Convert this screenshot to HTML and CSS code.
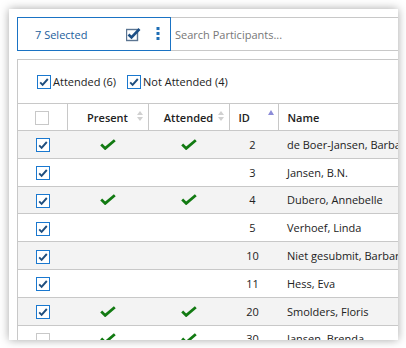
FILE: index.html
```html
<!DOCTYPE html>
<html lang="en">
<head>
    <meta charset="UTF-8">
    <meta name="viewport" content="width=device-width, initial-scale=1.0">
    <title>Participants</title>
    <link rel="stylesheet" href="styles.css">
</head>
<body>

<div class="panel">
    <div class="toolbar">
        <div class="selection">
            <span class="count">7 Selected</span>
            <svg class="select-all" width="16" height="15" viewBox="0 0 16 15">
                <rect x="0.5" y="2.5" width="11" height="11" fill="none" stroke="#5b7592" stroke-width="1.4"/>
                <path d="M2.5 7.5 L5.5 10.5 L13.5 2" fill="none" stroke="#1d4f86" stroke-width="2.6"/>
            </svg>
            <svg class="kebab" width="4" height="14" viewBox="0 0 4 14">
                <rect x="0.5" y="0" width="3" height="3" fill="#1f6eb5"/>
                <rect x="0.5" y="5" width="3" height="3" fill="#1f6eb5"/>
                <rect x="0.5" y="10" width="3" height="3" fill="#1f6eb5"/>
            </svg>
        </div>
        <div class="search">
            <input type="text" placeholder="Search Participants...">
        </div>
    </div>

    <div class="grid-box">
        <div class="filters">
            <label class="filter"><span class="cb on"></span>Attended (6)</label>
            <label class="filter"><span class="cb on"></span>Not Attended (4)</label>
        </div>

        <table class="grid">
            <colgroup>
                <col class="c-sel">
                <col class="c-present">
                <col class="c-attended">
                <col class="c-id">
                <col class="c-name">
            </colgroup>
            <thead>
                <tr>
                    <th class="sel"><span class="cb"></span></th>
                    <th class="mid">Present<span class="sort both"></span></th>
                    <th class="mid">Attended<span class="sort both"></span></th>
                    <th class="id">ID<span class="sort asc"></span></th>
                    <th class="name">Name</th>
                </tr>
            </thead>
            <tbody id="rows"></tbody>
        </table>
    </div>
</div>

<script>
    const participants = [
        { id: 2, name: "de Boer-Jansen, Barbara", present: true, attended: true, sel: true },
        { id: 3, name: "Jansen, B.N.", present: false, attended: false, sel: true },
        { id: 4, name: "Dubero, Annebelle", present: true, attended: true, sel: true },
        { id: 5, name: "Verhoef, Linda", present: false, attended: false, sel: true },
        { id: 10, name: "Niet gesubmit, Barbara", present: false, attended: false, sel: true },
        { id: 11, name: "Hess, Eva", present: false, attended: false, sel: true },
        { id: 20, name: "Smolders, Floris", present: true, attended: true, sel: true },
        { id: 30, name: "Jansen, Brenda", present: true, attended: true, sel: false }
    ];

    const tick = '<svg class="tick" width="16" height="11" viewBox="0 0 16 11">' +
        '<path d="M1.2 5.6 L5.2 9.4 L14.8 1.2" fill="none" stroke="#127a12" stroke-width="2.8"/></svg>';

    // Build the table body
    const rows = document.getElementById("rows");
    participants.forEach(function (p) {
        rows.innerHTML += `<tr>
            <td class="sel"><span class="cb${p.sel ? ' on' : ''}"></span></td>
            <td class="mid">${p.present ? tick : ''}</td>
            <td class="mid">${p.attended ? tick : ''}</td>
            <td class="id">${p.id}</td>
            <td class="name">${p.name}</td>
        </tr>`;
    });
</script>

</body>
</html>
```

FILE: styles.css
```css
body {
    margin: 0;
    padding: 0;
    background-color: #fff;
    font-family: "Open Sans", "DejaVu Sans", sans-serif;
    font-size: 11px;
    color: #222;
}

.panel {
    margin: 9px;
    width: 389px;
    height: 331px;
    box-sizing: border-box;
    padding: 8px;
    overflow: hidden;
    background-color: #fff;
    box-shadow: 0 0 9px rgba(0, 0, 0, 0.35);
}

.toolbar {
    display: flex;
    width: 420px;
    height: 34px;
}

.selection {
    display: flex;
    align-items: center;
    width: 154px;
    box-sizing: border-box;
    border: 1px solid #1a73c4;
    padding-left: 17px;
}

.count {
    color: #22609c;
    flex: 1;
}

.select-all {
    margin-right: 14px;
}

.kebab {
    margin-right: 10px;
}

.search {
    flex: 1;
    display: flex;
    border-top: 1px solid #c8c8c8;
    border-bottom: 1px solid #c8c8c8;
}

.search input {
    flex: 1;
    border: none;
    outline: none;
    padding: 0 4px;
    font-family: inherit;
    font-size: 11px;
    color: #222;
}

.search input::placeholder {
    color: #777;
}

.grid-box {
    margin-top: 8px;
    width: 460px;
    border-top: 1px solid #c8c8c8;
    border-left: 1px solid #c8c8c8;
}

.filters {
    display: flex;
    align-items: center;
    height: 43px;
    padding-left: 19px;
    gap: 11px;
}

.filter {
    display: flex;
    align-items: center;
    gap: 2px;
    color: #222;
}

/* checkbox look */
.cb {
    display: inline-block;
    width: 12px;
    height: 12px;
    border: 1px solid #c8c8c8;
    background-color: #fff;
    vertical-align: middle;
}

.cb.on {
    border-color: #1a78cf;
    background: #fff url("data:image/svg+xml;utf8,<svg xmlns='http://www.w3.org/2000/svg' width='12' height='12' viewBox='0 0 12 12'><path d='M2.2 6.4 L4.6 8.8 L9.8 3' fill='none' stroke='%231f4e7e' stroke-width='1.9'/></svg>") no-repeat center;
}

.grid {
    border-collapse: collapse;
    table-layout: fixed;
    width: 459px;
}

.c-sel { width: 49px; }
.c-present { width: 81px; }
.c-attended { width: 81px; }
.c-id { width: 49px; }
.c-name { width: 199px; }

.grid th {
    position: relative;
    height: 26px;
    padding: 0;
    font-weight: 600;
    color: #222;
    border-top: 1px solid #c8c8c8;
    border-bottom: 1px solid #c8c8c8;
    border-left: 1px solid #c8c8c8;
}

.grid th.sel {
    border-left: none;
}

.grid td {
    height: 26.8px;
    padding: 0;
    border-bottom: 1px solid #c8c8c8;
    white-space: nowrap;
    overflow: hidden;
}

.grid tbody tr:nth-child(odd) td {
    background-color: #f3f3f3;
}

.sel,
.mid {
    text-align: center;
}

.grid td.id {
    text-align: center;
    padding-right: 2px;
}

.grid th.id,
.grid th.name {
    text-align: left;
    padding-left: 9px;
}

.grid td.name {
    padding-left: 9px;
}

.tick {
    display: block;
    margin: 0 auto;
}

/* sort arrows */
.sort {
    position: absolute;
    right: 5px;
    top: 7px;
    width: 6px;
    height: 12px;
}

.sort.both::before,
.sort.both::after,
.sort.asc::before {
    content: "";
    position: absolute;
    left: 0;
    border-left: 3px solid transparent;
    border-right: 3px solid transparent;
}

.sort.both::before {
    top: 0;
    border-bottom: 4px solid #d0d0d0;
}

.sort.both::after {
    top: 6px;
    border-top: 4px solid #d0d0d0;
}

.sort.asc {
    right: 4px;
    top: 6px;
}

.sort.asc::before {
    top: 0;
    border-left-width: 3.5px;
    border-right-width: 3.5px;
    border-bottom: 5px solid #8c8cd8;
}
```
